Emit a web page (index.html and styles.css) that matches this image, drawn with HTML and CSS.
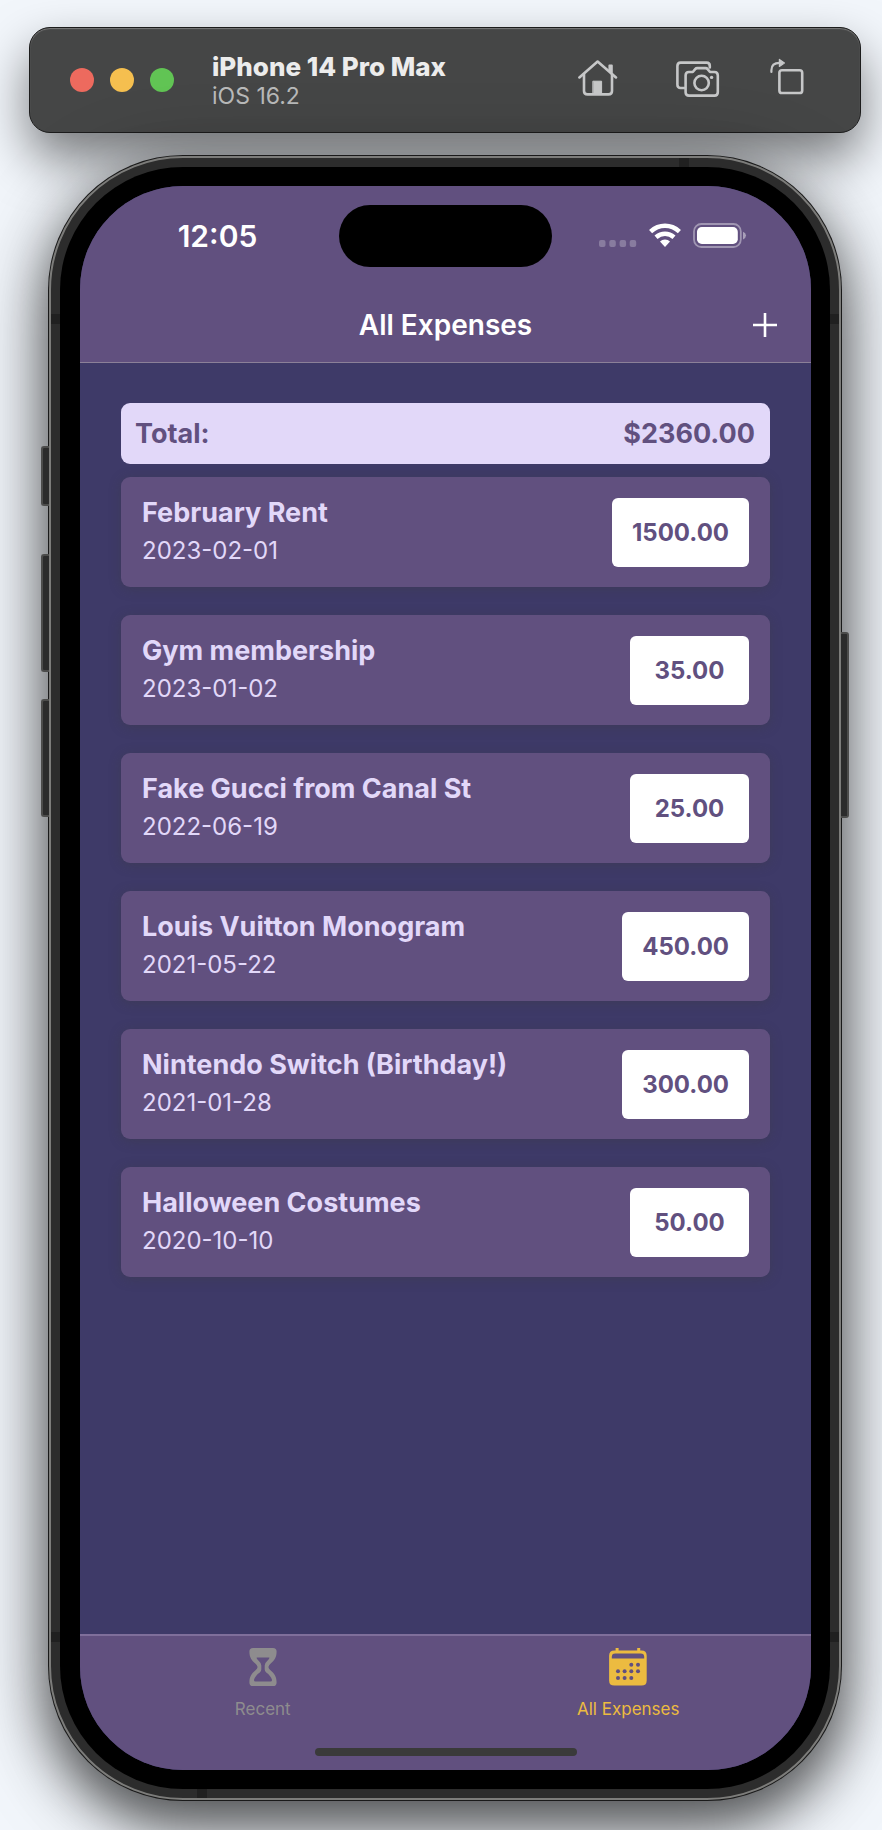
FILE: index.html
```html
<!DOCTYPE html>
<html lang="en">
<head>
<meta charset="utf-8">
<meta name="viewport" content="width=device-width, initial-scale=1">
<title>All Expenses</title>
<link rel="stylesheet" href="styles.css">
</head>
<body>
<header class="toolbar">
  <div class="lights">
    <button class="light light-close" aria-label="Close"></button>
    <button class="light light-min" aria-label="Minimize"></button>
    <button class="light light-max" aria-label="Zoom"></button>
  </div>
  <div class="device">
    <div class="device-name">iPhone 14 Pro Max</div>
    <div class="device-os">iOS 16.2</div>
  </div>
  <div class="tools">
    <button class="tool" aria-label="Home">
      <svg width="48" height="40" viewBox="0 0 48 40" fill="none" stroke="currentColor" stroke-width="2.6" stroke-linecap="round" stroke-linejoin="round">
        <path d="M1.4 19.4 19.6 3.600 38 19.400"/>
        <path d="M6 16v17q0 3.400 3.500 3.400h21q3.500 0 3.500-3.400V16"/>
        <path d="M31.400 7.600h2.400v6.600l-2.400-2.200z" fill="currentColor" stroke-width="2"/>
        <path d="M15.200 23.200h8.400v12.600h-8.400z" fill="currentColor" stroke-width="1"/>
      </svg>
    </button>
    <button class="tool" aria-label="Screenshot">
      <svg width="44" height="40" viewBox="0 0 44 40" fill="none" stroke="currentColor" stroke-width="2.6" stroke-linecap="round" stroke-linejoin="round">
        <path d="M8.4 30H4.600q-3.200 0-3.200-3.300V8Q1.400 4.600 4.600 4.600H30.600q3.200 0 3.200 3.300v1.600"/>
        <path d="M12.800 14h4l2.400-2.900q.8-1 2-1h8.400q1.200 0 2 1l2.400 2.900h4.400q3.400 0 3.400 3.400v16.800q0 3.400-3.400 3.400H13q-3.400 0-3.400-3.400V17.400q0-3.400 3.200-3.400z"/>
        <circle cx="25.600" cy="25" r="7.200"/>
        <circle cx="35.600" cy="19.400" r="1.700" fill="currentColor" stroke="none"/>
      </svg>
    </button>
    <button class="tool" aria-label="Rotate">
      <svg width="34" height="40" viewBox="0 0 34 40" fill="none" stroke="currentColor" stroke-width="2.600" stroke-linecap="round" stroke-linejoin="round">
        <rect x="9.400" y="12.200" width="22.800" height="22.800" rx="2.600"/>
        <path d="M1.400 14V12.300Q1.400 4.800 9.600 4.800" stroke-width="2.200"/>
        <path d="M9.400 1.400v7l5-3.500z" fill="currentColor" stroke-width="1.200"/>
      </svg>
    </button>
  </div>
</header>

<main class="phone">
  <i class="key key-action"></i><i class="key key-up"></i><i class="key key-down"></i><i class="key key-power"></i>
  <div class="frame">
    <i class="band band-top"></i><i class="band band-bottom"></i>
    <i class="band band-lt"></i><i class="band band-rt"></i><i class="band band-lb"></i><i class="band band-rb"></i>
    <div class="bezel">
      <div class="screen">
        <div class="app-head">
          <div class="status">
            <div class="time">12:05</div>
            <div class="island"></div>
            <div class="signals">
              <svg width="38" height="26" viewBox="0 0 38 26" fill="#fff" fill-opacity=".25">
                <rect x="0" y="17" width="6.500" height="7" rx="2"/><rect x="10.300" y="17" width="6.500" height="7" rx="2"/><rect x="20.600" y="17" width="6.500" height="7" rx="2"/><rect x="30.700" y="17" width="6.500" height="7" rx="2"/>
              </svg>
              <svg width="32" height="26" viewBox="0 0 32 26" fill="none" stroke="#fff" stroke-width="4.600">
                <path d="M1.600 8.600Q8 2.800 16 2.800T30.400 8.600"/>
                <path d="M7 14.200Q11 10.800 16 10.800T25 14.200"/>
                <path d="M16 16.600q-3 0-5 2l5 5.400 5-5.400q-2-2-5-2z" fill="#fff" stroke="none"/>
              </svg>
              <svg width="54" height="26" viewBox="0 0 54 26">
                <rect x="1" y="1" width="46.800" height="23" rx="7.400" fill="none" stroke="#fff" stroke-opacity=".4" stroke-width="1.800"/>
                <rect x="4" y="4" width="40.800" height="17" rx="4.800" fill="#fff"/>
                <path d="M50 8.800q3 1.200 3 3.800t-3 3.800z" fill="#fff" fill-opacity=".45"/>
              </svg>
            </div>
          </div>
          <div class="nav">
            <h1 class="nav-title">All Expenses</h1>
            <button class="add" aria-label="Add expense">
              <svg width="24" height="24" viewBox="0 0 24 24" stroke="#fff" stroke-width="2.600"><path d="M12 0v24M0 12h24"/></svg>
            </button>
          </div>
        </div>

        <div class="content">
          <div class="total"><span>Total:</span><span>$2360.00</span></div>
          <ul class="list">
            <li class="card"><div class="info"><div class="name">February Rent</div><div class="date">2023-02-01</div></div><div class="amount">1500.00</div></li>
            <li class="card"><div class="info"><div class="name">Gym membership</div><div class="date">2023-01-02</div></div><div class="amount">35.00</div></li>
            <li class="card"><div class="info"><div class="name">Fake Gucci from Canal St</div><div class="date">2022-06-19</div></div><div class="amount">25.00</div></li>
            <li class="card"><div class="info"><div class="name">Louis Vuitton Monogram</div><div class="date">2021-05-22</div></div><div class="amount">450.00</div></li>
            <li class="card"><div class="info"><div class="name">Nintendo Switch (Birthday!)</div><div class="date">2021-01-28</div></div><div class="amount">300.00</div></li>
            <li class="card"><div class="info"><div class="name">Halloween Costumes</div><div class="date">2020-10-10</div></div><div class="amount">50.00</div></li>
          </ul>
        </div>

        <div class="foot">
          <nav class="tabs">
            <a class="tab" href="#recent">
              <svg width="40" height="40" viewBox="0 0 40 40" fill="currentColor" fill-rule="evenodd">
                <path d="M10 1h20q3.600 0 3.600 3.600c0 6.400-2.600 9-5.600 11.700q-2.600 2.200-2.600 3.700t2.600 3.700c3 2.700 5.600 5.300 5.600 11.700q0 3.600-3.600 3.600H10q-3.600 0-3.600-3.600c0-6.400 2.600-9 5.600-11.700q2.600-2.200 2.600-3.700t-2.600-3.700C9 13.600 6.400 11 6.400 4.600Q6.400 1 10 1zM14.200 10.400h11.800q.8 0 .3.900-.5 1.100-1.900 2.400Q21.700 16 21.700 18.400v4.200q0 1.800 1.500 2.800c3 2 5 4.600 5.700 7.200q.4 2-1.300 2H12.400q-1.700 0-1.300-2c.7-2.600 2.700-5.200 5.700-7.200q1.500-1 1.500-2.800v-4.200q0-2.400-2.700-4.700-1.400-1.300-1.900-2.400-.5-.9.500-.9z"/>
              </svg>
              <span>Recent</span>
            </a>
            <a class="tab tab-active" href="#all" aria-current="page">
              <svg width="40" height="40" viewBox="0 0 40 40" fill="currentColor" fill-rule="evenodd">
                <path d="M7.600 1h3v2.600h18.600V1h3v2.600h1.200q5.300 0 5.300 5.200v24.600q0 5.200-5.300 5.200H6.400q-5.300 0-5.300-5.200V8.800q0-5.200 5.300-5.200h1.200zM3.800 11.600v-1.800q0-3.400 3.400-3.400h25.600q3.400 0 3.400 3.400v1.800z"/>
                <g class="dots">
                  <circle cx="23.300" cy="17.700" r="2"/><circle cx="30" cy="17.700" r="2"/>
                  <circle cx="10" cy="24.300" r="2"/><circle cx="16.600" cy="24.300" r="2"/><circle cx="23.300" cy="24.300" r="2"/><circle cx="30" cy="24.300" r="2"/>
                  <circle cx="10" cy="31" r="2"/><circle cx="16.600" cy="31" r="2"/><circle cx="23.300" cy="31" r="2"/>
                </g>
              </svg>
              <span>All Expenses</span>
            </a>
          </nav>
          <div class="home-bar"></div>
        </div>
      </div>
    </div>
  </div>
</main>
</body>
</html>
```
FILE: styles.css
```css
* { box-sizing: border-box; }

body {
  margin: 0;
  min-height: 100vh;
  padding: 27px 21px 29px 29px;
  display: flex;
  flex-direction: column;
  gap: 22px;
  overflow-x: hidden;
  background: #f2f6fb;
  font-family: Inter, "Liberation Sans", sans-serif;
}

button {
  padding: 0;
  border: 0;
  background: none;
  color: inherit;
  font: inherit;
}

svg { display: block; }

/* Simulator toolbar */
.toolbar {
  display: flex;
  align-items: center;
  height: 106px;
  padding: 0 56px 0 40px;
  border: 1px solid #1c1c1c;
  border-radius: 21px;
  background: #454646;
  box-shadow: inset 0 1px 1px #7a7a7a, 0 24px 50px rgba(0, 0, 0, .5);
}

.lights { display: flex; gap: 16px; }
.light { width: 24px; height: 24px; border-radius: 50%; }
.light-close { background: #ed6a5e; }
.light-min { background: #f5bf4f; }
.light-max { background: #61c454; }

.device { flex: 1; padding-left: 38px; }
.device-name { font-size: 26px; line-height: 31px; font-weight: 800; color: #ececec; }
.device-os { font-size: 23px; line-height: 28px; color: #b9baba; }

.tools { display: flex; gap: 50px; padding-bottom: 4px; color: #c6c7c8; }

/* Phone body */
.phone {
  position: relative;
  flex: 1;
  display: flex;
  margin: 0 19px;
  border-radius: 135px;
  background: #1a1a1a;
  padding: 1px;
  box-shadow: 0 24px 50px rgba(0, 0, 0, .5), 0 16px 80px rgba(0, 0, 0, .4);
}

.frame {
  position: relative;
  flex: 1;
  display: flex;
  padding: 9px;
  border: 2px solid #7c7c7a;
  border-radius: 134px;
  background: #2c2c2c;
}

.bezel {
  flex: 1;
  display: flex;
  padding: 19px 19px 19px 20px;
  border-radius: 123px;
  background: #000;
}

.key {
  position: absolute;
  width: 8px;
  border: 2px solid #4c4c4b;
  background: #2b2b2b;
}
.key-action, .key-up, .key-down { left: -7px; border-right: 0; border-radius: 3px 0 0 3px; }
.key-action { top: 291px; height: 60px; }
.key-up { top: 399px; height: 118px; }
.key-down { top: 544px; height: 118px; }
.key-power { right: -7px; top: 477px; height: 186px; border-left: 0; border-radius: 0 3px 3px 0; }

.band { position: absolute; background: #202020; }
.band-top, .band-bottom { width: 10px; height: 9px; }
.band-top { top: 0; right: 150px; }
.band-bottom { bottom: 0; left: 146px; }
.band-lt, .band-rt, .band-lb, .band-rb { width: 9px; height: 10px; }
.band-lt, .band-lb { left: 0; }
.band-rt, .band-rb { right: 0; }
.band-lt, .band-rt { top: 156px; }
.band-lb, .band-rb { bottom: 156px; }

.screen {
  flex: 1;
  display: flex;
  flex-direction: column;
  overflow: hidden;
  border-radius: 103px;
  background: #3e3a68;
}

/* Status bar and title */
.app-head {
  background: #61507f;
  border-bottom: 1px solid #8b8098;
  color: #fff;
}

.status {
  display: grid;
  grid-template-columns: 1fr 213px 1fr;
  align-items: center;
  padding: 19px 0 20px;
}
.time { padding-left: 16px; text-align: center; font-size: 30px; line-height: 36px; font-weight: 600; }
.island { height: 62px; border-radius: 31px; background: #000; }
.signals { display: flex; justify-content: center; gap: 12px; padding-right: 17px; }

.nav {
  display: grid;
  grid-template-columns: 1fr auto 1fr;
  align-items: center;
  height: 75px;
  padding: 0 34px;
}
.nav-title { grid-column: 2; margin: 0; font-size: 28px; line-height: 34px; font-weight: 600; }
.add { justify-self: end; }

/* Expenses */
.content { flex: 1; padding: 40px 41px; }

.total {
  display: flex;
  justify-content: space-between;
  padding: 13px 15px 13px 14px;
  border-radius: 9px;
  background: #e2d8f9;
  color: #61507f;
  font-size: 27px;
  line-height: 35px;
  font-weight: 700;
}

.list {
  display: flex;
  flex-direction: column;
  gap: 28px;
  margin: 13px 0 0;
  padding: 0;
  list-style: none;
}

.card {
  display: flex;
  justify-content: space-between;
  align-items: center;
  padding: 20px 21px;
  border-radius: 9px;
  background: #61507f;
  color: #e2d8f9;
  box-shadow: 0 2px 12px rgba(60, 60, 60, .35);
}
.info { display: grid; gap: 6px; }
.name { font-size: 27px; line-height: 32px; font-weight: 700; }
.date { font-size: 24px; line-height: 32px; }

.amount {
  min-width: 119px;
  padding: 0 20px;
  border-radius: 6px;
  background: #fff;
  color: #61507f;
  text-align: center;
  font-size: 24px;
  line-height: 69px;
  font-weight: 700;
}

/* Tab bar */
.foot {
  padding: 11px 0 14px;
  border-top: 2px solid #7f6f9b;
  background: #61507f;
}
.tabs { display: flex; }
.tab {
  flex: 1;
  display: flex;
  flex-direction: column;
  align-items: center;
  gap: 12px;
  color: #8e8c8e;
  font-size: 17px;
  line-height: 20px;
  text-decoration: none;
}
.tab-active { color: #ecbb40; }
.dots { fill: #61507f; }
.home-bar {
  width: 262px;
  height: 8px;
  margin: 29px auto 0;
  border-radius: 4px;
  background: #3a3a3a;
}
```
